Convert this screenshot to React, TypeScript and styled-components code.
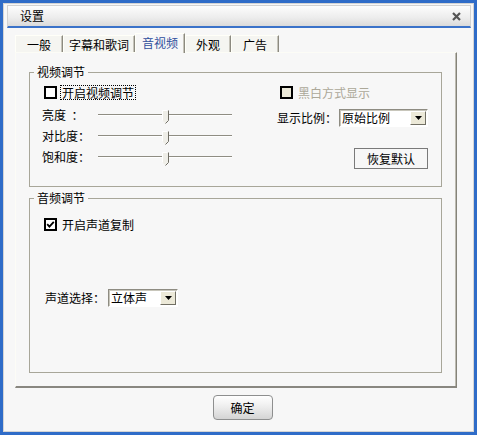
import React from 'react'
import styled, { createGlobalStyle } from 'styled-components'

const GlobalStyle = createGlobalStyle`
  html, body {
    margin: 0;
    padding: 0;
    background: #ffffff;
  }
  body {
    font-family: 'Noto Sans CJK SC', 'Liberation Sans', sans-serif;
    font-size: 12px;
    line-height: 14px;
    color: #000;
  }
`

const Window = styled.div`
  width: 477px;
  height: 435px;
  box-sizing: border-box;
  border: 3px solid #2f6cc8;
  background: #f7f7f7;
  box-shadow: inset 0 0 0 1px #d4d4d4;
  display: flex;
  flex-direction: column;
`

const TitleBar = styled.div`
  margin: 2px 3px 0 4px;
  height: 23px;
  box-sizing: border-box;
  border: 1px solid #d2d2d2;
  border-bottom: 2px solid #3a72c9;
  background: linear-gradient(#fdfdfd, #ececec 60%, #dadada);
  display: flex;
  align-items: center;
  justify-content: space-between;
  padding: 0 9px 0 12px;
`

const Body = styled.div`
  padding: 5px 0 0 12px;
  display: flex;
  flex-direction: column;
`

const TabRow = styled.div`
  height: 20px;
  display: flex;
  align-items: flex-end;
`

const Tab = styled.div<{ $w: number; $active?: boolean }>`
  width: ${p => p.$w}px;
  height: ${p => (p.$active ? 20 : 17)}px;
  margin-bottom: ${p => (p.$active ? 0 : 1)}px;
  box-sizing: border-box;
  border-top: 1px solid #fffff8;
  border-left: 1px solid #fffff8;
  border-right: 1px solid #8c8a80;
  box-shadow: inset -1px 0 #c6c4ba;
  background: ${p => (p.$active ? '#f7f7f7' : '#f5f5f1')};
  color: ${p => (p.$active ? '#2f4f9c' : '#000')};
  text-align: center;
  padding-top: 2px;
  position: ${p => (p.$active ? 'relative' : 'static')};
  z-index: 1;
`

const Panel = styled.div`
  margin-top: -1px;
  width: 442px;
  height: 336px;
  box-sizing: border-box;
  border-top: 1px solid #fcfcf6;
  border-left: 1px solid #fcfcf6;
  border-right: 1px solid #858379;
  border-bottom: 2px solid #898780;
  box-shadow: inset -1px 0 #bdbbb1;
  padding: 12px 13px 0 13px;
  display: flex;
  flex-direction: column;
  gap: 4px;
`

const Group = styled.fieldset<{ $h: number }>`
  margin: 0;
  padding: 0;
  width: 413px;
  height: ${p => p.$h}px;
  box-sizing: border-box;
  border: 1px solid #a8a699;
  min-width: 0;
`

const Legend = styled.legend`
  padding: 0 3px;
  margin-left: 4px;
  line-height: 14px;
`

const VideoBody = styled.div`
  padding: 6px 13px 0 12px;
  display: flex;
  justify-content: space-between;
`

const Column = styled.div<{ $w: number }>`
  width: ${p => p.$w}px;
  display: flex;
  flex-direction: column;
`

const CheckRow = styled.label<{ $indent: number }>`
  height: 15px;
  margin-left: ${p => p.$indent}px;
  display: flex;
  align-items: center;
`

const Box = styled.span<{ $disabled?: boolean }>`
  width: 13px;
  height: 13px;
  box-sizing: border-box;
  border: 2px solid #000;
  background: ${p => (p.$disabled ? '#ece9d8' : '#fff')};
  display: flex;
  align-items: center;
  justify-content: center;
`

const CheckText = styled.span<{ $focus?: boolean; $disabled?: boolean }>`
  margin-left: 3px;
  padding: 0 1px;
  border: 1px ${p => (p.$focus ? 'dotted #000' : 'solid transparent')};
  color: ${p => (p.$disabled ? '#aca899' : '#000')};
  line-height: 13px;
`

const SliderRow = styled.div<{ $first?: boolean }>`
  height: 21px;
  margin-top: ${p => (p.$first ? 4 : 0)}px;
  display: flex;
  align-items: center;
`

const RowLabel = styled.span<{ $w: number }>`
  width: ${p => p.$w}px;
  white-space: pre;
  flex-shrink: 0;
`

const Track = styled.div`
  flex: 1;
  height: 21px;
  margin-left: 8px;
  position: relative;
  &::before {
    content: '';
    position: absolute;
    left: 0;
    right: 0;
    top: 10px;
    height: 1px;
    background: #8f8d83;
    border-bottom: 1px solid #ffffff;
  }
`

const Thumb = styled.svg`
  position: absolute;
  top: 6px;
  margin-left: -3px;
`

const ComboRow = styled.div<{ $top: number; $indent?: number }>`
  margin-top: ${p => p.$top}px;
  margin-left: ${p => p.$indent ?? 0}px;
  display: flex;
  align-items: center;
`

const Combo = styled.div<{ $w: number; $gap: number }>`
  width: ${p => p.$w}px;
  height: 18px;
  margin-left: ${p => p.$gap}px;
  box-sizing: border-box;
  border: 1px solid;
  border-color: #8e8c82 #ffffff #ffffff #8e8c82;
  box-shadow: inset 1px 1px #c8c6bb;
  background: #fff;
  display: flex;
  align-items: center;
  padding-left: 2px;
`

const ComboText = styled.span`
  flex: 1;
`

const DropButton = styled.span`
  width: 16px;
  height: 14px;
  margin-right: 1px;
  box-sizing: border-box;
  border: 1px solid;
  border-color: #ffffff #716f64 #716f64 #ffffff;
  background: #ece9d8;
  display: flex;
  align-items: center;
  justify-content: center;
`

const FlatButton = styled.button`
  margin-top: 21px;
  align-self: flex-end;
  width: 74px;
  height: 21px;
  box-sizing: border-box;
  border: 1px solid #7a7a7a;
  background: #f7f7f7;
  font: inherit;
  color: #000;
  padding: 0;
`

const AudioBody = styled.div`
  padding: 12px 0 0 14px;
  display: flex;
  flex-direction: column;
`

const Footer = styled.div`
  width: 442px;
  box-sizing: border-box;
  padding-left: 13px;
  margin-top: 7px;
  display: flex;
  justify-content: center;
`

const OkButton = styled.button`
  width: 60px;
  height: 25px;
  box-sizing: border-box;
  border: 1px solid #8e8f8f;
  border-radius: 4px;
  background: linear-gradient(#ffffff, #eeeeee 45%, #d4d4d4);
  font: inherit;
  color: #000;
  padding: 0;
`

const CloseIcon = () => (
  <svg width="9" height="9" viewBox="0 0 9 9">
    <path d="M1 1 L8 8 M8 1 L1 8" stroke="#555" strokeWidth="2.2" />
  </svg>
)

const CheckMark = () => (
  <svg width="9" height="9" viewBox="0 0 9 9">
    <path d="M1.2 4.2 L3.4 6.6 L7.8 1.8" stroke="#000" strokeWidth="1.8" fill="none" />
  </svg>
)

const Arrow = () => (
  <svg width="7" height="4" viewBox="0 0 7 4">
    <path d="M0 0 H7 L3.5 4 Z" fill="#000" />
  </svg>
)

type CheckProps = { text: string; checked?: boolean; disabled?: boolean; focus?: boolean; indent: number }

const Check: React.FC<CheckProps> = ({ text, checked, disabled, focus, indent }) => (
  <CheckRow $indent={indent}>
    <Box $disabled={disabled}>{checked && <CheckMark />}</Box>
    <CheckText $focus={focus} $disabled={disabled}>
      {text}
    </CheckText>
  </CheckRow>
)

const Slider: React.FC<{ label: string; value: number; first?: boolean }> = ({ label, value, first }) => (
  <SliderRow $first={first}>
    <RowLabel $w={48}>{label}</RowLabel>
    <Track>
      <Thumb width="7" height="14" viewBox="0 0 7 14" style={{ left: `${value}%` }}>
        <path d="M0.5 10.5 V0.5 H6.5 V10.5 L3.5 13.5 Z" fill="#efeee8" />
        <path d="M0.5 10.5 V0.5 H5.5" stroke="#ffffff" fill="none" />
        <path d="M6.5 0.5 V10.5 L3.5 13.5" stroke="#6f6d64" fill="none" />
      </Thumb>
    </Track>
  </SliderRow>
)

const Select: React.FC<{ value: string; width: number; gap: number }> = ({ value, width, gap }) => (
  <Combo $w={width} $gap={gap}>
    <ComboText>{value}</ComboText>
    <DropButton>
      <Arrow />
    </DropButton>
  </Combo>
)

const tabs = [
  { name: '一般', w: 48 },
  { name: '字幕和歌词', w: 72 },
  { name: '音视频', w: 50, active: true },
  { name: '外观', w: 46 },
  { name: '广告', w: 48 },
]

const App: React.FC = () => (
  <>
    <GlobalStyle />
    <Window>
      <TitleBar>
        <span>设置</span>
        <CloseIcon />
      </TitleBar>
      <Body>
        <TabRow>
          {tabs.map(t => (
            <Tab key={t.name} $w={t.w} $active={t.active}>
              {t.name}
            </Tab>
          ))}
        </TabRow>
        <Panel>
          <Group $h={122}>
            <Legend>视频调节</Legend>
            <VideoBody>
              <Column $w={190}>
                <Check text="开启视频调节" focus indent={2} />
                <Slider label={'亮度  ：'} value={50} first />
                <Slider label="对比度：" value={50} />
                <Slider label="饱和度：" value={50} />
              </Column>
              <Column $w={151}>
                <Check text="黑白方式显示" disabled indent={3} />
                <ComboRow $top={9}>
                  <RowLabel $w={60}>显示比例：</RowLabel>
                  <Select value="原始比例" width={89} gap={2} />
                </ComboRow>
                <FlatButton>恢复默认</FlatButton>
              </Column>
            </VideoBody>
          </Group>
          <Group $h={182}>
            <Legend>音频调节</Legend>
            <AudioBody>
              <Check text="开启声道复制" checked indent={0} />
              <ComboRow $top={57} $indent={1}>
                <RowLabel $w={60}>声道选择：</RowLabel>
                <Select value="立体声" width={70} gap={3} />
              </ComboRow>
            </AudioBody>
          </Group>
        </Panel>
        <Footer>
          <OkButton>确定</OkButton>
        </Footer>
      </Body>
    </Window>
  </>
)

export default App
